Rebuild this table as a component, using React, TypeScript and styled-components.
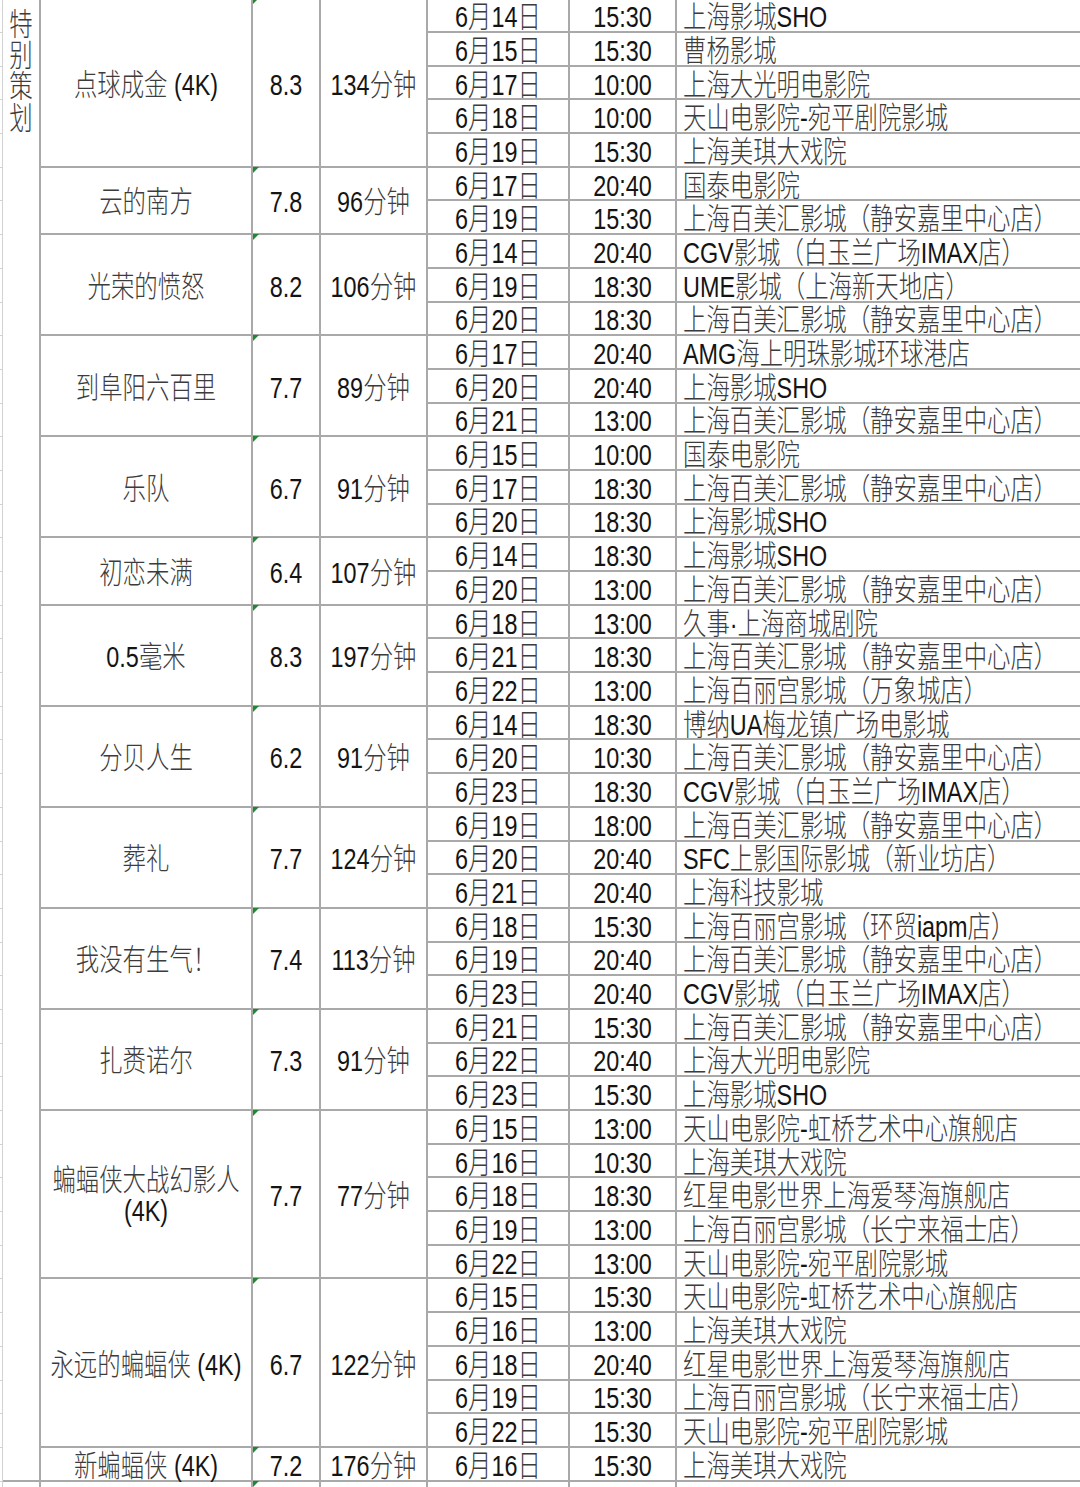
import React from 'react';
import styled, { createGlobalStyle } from 'styled-components';

const ROW = 33.7;
const LINE = '#a9a9a9';

type Show = [string, string, string];
type Film = { name: string; rating: string; dur: string; shows: Show[] };

const films: Film[] = [
  { name: '点球成金 (4K)', rating: '8.3', dur: '134分钟', shows: [
    ['6月14日', '15:30', '上海影城SHO'],
    ['6月15日', '15:30', '曹杨影城'],
    ['6月17日', '10:00', '上海大光明电影院'],
    ['6月18日', '10:00', '天山电影院-宛平剧院影城'],
    ['6月19日', '15:30', '上海美琪大戏院'],
  ] },
  { name: '云的南方', rating: '7.8', dur: '96分钟', shows: [
    ['6月17日', '20:40', '国泰电影院'],
    ['6月19日', '15:30', '上海百美汇影城（静安嘉里中心店）'],
  ] },
  { name: '光荣的愤怒', rating: '8.2', dur: '106分钟', shows: [
    ['6月14日', '20:40', 'CGV影城（白玉兰广场IMAX店）'],
    ['6月19日', '18:30', 'UME影城（上海新天地店）'],
    ['6月20日', '18:30', '上海百美汇影城（静安嘉里中心店）'],
  ] },
  { name: '到阜阳六百里', rating: '7.7', dur: '89分钟', shows: [
    ['6月17日', '20:40', 'AMG海上明珠影城环球港店'],
    ['6月20日', '20:40', '上海影城SHO'],
    ['6月21日', '13:00', '上海百美汇影城（静安嘉里中心店）'],
  ] },
  { name: '乐队', rating: '6.7', dur: '91分钟', shows: [
    ['6月15日', '10:00', '国泰电影院'],
    ['6月17日', '18:30', '上海百美汇影城（静安嘉里中心店）'],
    ['6月20日', '18:30', '上海影城SHO'],
  ] },
  { name: '初恋未满', rating: '6.4', dur: '107分钟', shows: [
    ['6月14日', '18:30', '上海影城SHO'],
    ['6月20日', '13:00', '上海百美汇影城（静安嘉里中心店）'],
  ] },
  { name: '0.5毫米', rating: '8.3', dur: '197分钟', shows: [
    ['6月18日', '13:00', '久事·上海商城剧院'],
    ['6月21日', '18:30', '上海百美汇影城（静安嘉里中心店）'],
    ['6月22日', '13:00', '上海百丽宫影城（万象城店）'],
  ] },
  { name: '分贝人生', rating: '6.2', dur: '91分钟', shows: [
    ['6月14日', '18:30', '博纳UA梅龙镇广场电影城'],
    ['6月20日', '10:30', '上海百美汇影城（静安嘉里中心店）'],
    ['6月23日', '18:30', 'CGV影城（白玉兰广场IMAX店）'],
  ] },
  { name: '葬礼', rating: '7.7', dur: '124分钟', shows: [
    ['6月19日', '18:00', '上海百美汇影城（静安嘉里中心店）'],
    ['6月20日', '20:40', 'SFC上影国际影城（新业坊店）'],
    ['6月21日', '20:40', '上海科技影城'],
  ] },
  { name: '我没有生气！', rating: '7.4', dur: '113分钟', shows: [
    ['6月18日', '15:30', '上海百丽宫影城（环贸iapm店）'],
    ['6月19日', '20:40', '上海百美汇影城（静安嘉里中心店）'],
    ['6月23日', '20:40', 'CGV影城（白玉兰广场IMAX店）'],
  ] },
  { name: '扎赉诺尔', rating: '7.3', dur: '91分钟', shows: [
    ['6月21日', '15:30', '上海百美汇影城（静安嘉里中心店）'],
    ['6月22日', '20:40', '上海大光明电影院'],
    ['6月23日', '15:30', '上海影城SHO'],
  ] },
  { name: '蝙蝠侠大战幻影人 (4K)', rating: '7.7', dur: '77分钟', shows: [
    ['6月15日', '13:00', '天山电影院-虹桥艺术中心旗舰店'],
    ['6月16日', '10:30', '上海美琪大戏院'],
    ['6月18日', '18:30', '红星电影世界上海爱琴海旗舰店'],
    ['6月19日', '13:00', '上海百丽宫影城（长宁来福士店）'],
    ['6月22日', '13:00', '天山电影院-宛平剧院影城'],
  ] },
  { name: '永远的蝙蝠侠 (4K)', rating: '6.7', dur: '122分钟', shows: [
    ['6月15日', '15:30', '天山电影院-虹桥艺术中心旗舰店'],
    ['6月16日', '13:00', '上海美琪大戏院'],
    ['6月18日', '20:40', '红星电影世界上海爱琴海旗舰店'],
    ['6月19日', '15:30', '上海百丽宫影城（长宁来福士店）'],
    ['6月22日', '15:30', '天山电影院-宛平剧院影城'],
  ] },
  { name: '新蝙蝠侠 (4K)', rating: '7.2', dur: '176分钟', shows: [
    ['6月16日', '15:30', '上海美琪大戏院'],
  ] },
];

const GlobalStyle = createGlobalStyle`
  html, body {
    margin: 0;
    padding: 0;
    background: #ffffff;
    overflow: hidden;
  }
  body {
    font-family: "Liberation Sans", "Noto Sans CJK SC", sans-serif;
  }
  * { box-sizing: border-box; }
`;

const Page = styled.div`
  width: 1080px;
  height: 1487px;
  overflow: hidden;
  background: #ffffff;
`;

const Sheet = styled.div`
  margin-top: -0.7px;
  display: flex;
  flex-direction: column;
`;

const Section = styled.div`
  display: flex;
`;

const Stub = styled.div`
  width: 3px;
  flex: none;
  display: flex;
  flex-direction: column;
  border-right: 1px solid #d2d2d2;
`;

const StubCell = styled.div`
  height: ${ROW}px;
  border-bottom: 1px solid #d2d2d2;
`;

const Side = styled.div`
  width: 38px;
  flex: none;
  display: flex;
  justify-content: center;
  align-items: flex-start;
  padding-top: 10px;
  border-right: 2px solid ${LINE};
  border-bottom: 2px solid ${LINE};
`;

const VerticalText = styled.div`
  width: 24px;
  font-size: 23.4px;
  line-height: 24px;
  text-align: center;
  color: #3c3c3c;
  font-weight: 300;
  transform: scaleY(1.3);
  transform-origin: top center;
`;

const Groups = styled.div`
  flex: 1;
  min-width: 0;
  display: flex;
  flex-direction: column;
`;

const Group = styled.div`
  display: grid;
  grid-template-columns: 212px 68px 107px 1fr;
`;

const Cell = styled.div<{ $left?: boolean; $open?: boolean }>`
  position: relative;
  min-width: 0;
  display: flex;
  align-items: center;
  justify-content: ${(p) => (p.$left ? 'flex-start' : 'center')};
  padding: ${(p) => (p.$left ? '0 0 0 6px' : '0 3px')};
  border-right: ${(p) => (p.$open ? 'none' : `2px solid ${LINE}`)};
  border-bottom: 2px solid ${LINE};
  overflow: ${(p) => (p.$left ? 'hidden' : 'visible')};
`;

const Shows = styled.div`
  min-width: 0;
  display: flex;
  flex-direction: column;
`;

const ShowRow = styled.div`
  display: grid;
  grid-template-columns: 142px 107px 1fr;
  height: ${ROW}px;
`;

const Marker = styled.span`
  position: absolute;
  top: -1px;
  left: 0;
  width: 0;
  height: 0;
  border-top: 6px solid #1f8a2d;
  border-right: 6px solid transparent;
`;

const Txt = styled.span<{ $wrap?: boolean }>`
  display: inline-block;
  font-size: 23.4px;
  line-height: 24px;
  text-align: center;
  white-space: ${(p) => (p.$wrap ? 'normal' : 'nowrap')};
  transform: translateY(1.5px) scaleY(1.28);
`;

const Cjk = styled.span`
  color: #3c3c3c;
  font-weight: 300;
`;

const Lat = styled.span`
  color: #141414;
`;

const CJK_RE = /([\u2E80-\u9FFF\u3000-\u303F\uFF00-\uFFEF]+)/;

function Mixed({ text, wrap }: { text: string; wrap?: boolean }) {
  const parts = text.split(CJK_RE).filter((s) => s.length > 0);
  return (
    <Txt $wrap={wrap}>
      {parts.map((p, i) =>
        CJK_RE.test(p) ? <Cjk key={i}>{p}</Cjk> : <Lat key={i}>{p}</Lat>
      )}
    </Txt>
  );
}

function FilmGroup({ film }: { film: Film }) {
  return (
    <Group>
      <Cell>
        <Mixed text={film.name} wrap />
      </Cell>
      <Cell>
        <Marker />
        <Mixed text={film.rating} />
      </Cell>
      <Cell>
        <Mixed text={film.dur} />
      </Cell>
      <Shows>
        {film.shows.map(([d, t, c], i) => (
          <ShowRow key={i}>
            <Cell>
              <Mixed text={d} />
            </Cell>
            <Cell>
              <Mixed text={t} />
            </Cell>
            <Cell $left $open>
              <Mixed text={c} />
            </Cell>
          </ShowRow>
        ))}
      </Shows>
    </Group>
  );
}

export default function App() {
  const rowCount = films.reduce((n, f) => n + f.shows.length, 0);
  const next: Film = { name: '', rating: '', dur: '', shows: [['', '', '']] };
  return (
    <Page>
      <GlobalStyle />
      <Sheet>
        <Section>
          <Stub>
            {Array.from({ length: rowCount }).map((_, i) => (
              <StubCell key={i} />
            ))}
          </Stub>
          <Side>
            <VerticalText>特别策划</VerticalText>
          </Side>
          <Groups>
            {films.map((f) => (
              <FilmGroup key={f.name} film={f} />
            ))}
          </Groups>
        </Section>
        <Section>
          <Stub>
            <StubCell />
          </Stub>
          <Side />
          <Groups>
            <FilmGroup film={next} />
          </Groups>
        </Section>
      </Sheet>
    </Page>
  );
}
